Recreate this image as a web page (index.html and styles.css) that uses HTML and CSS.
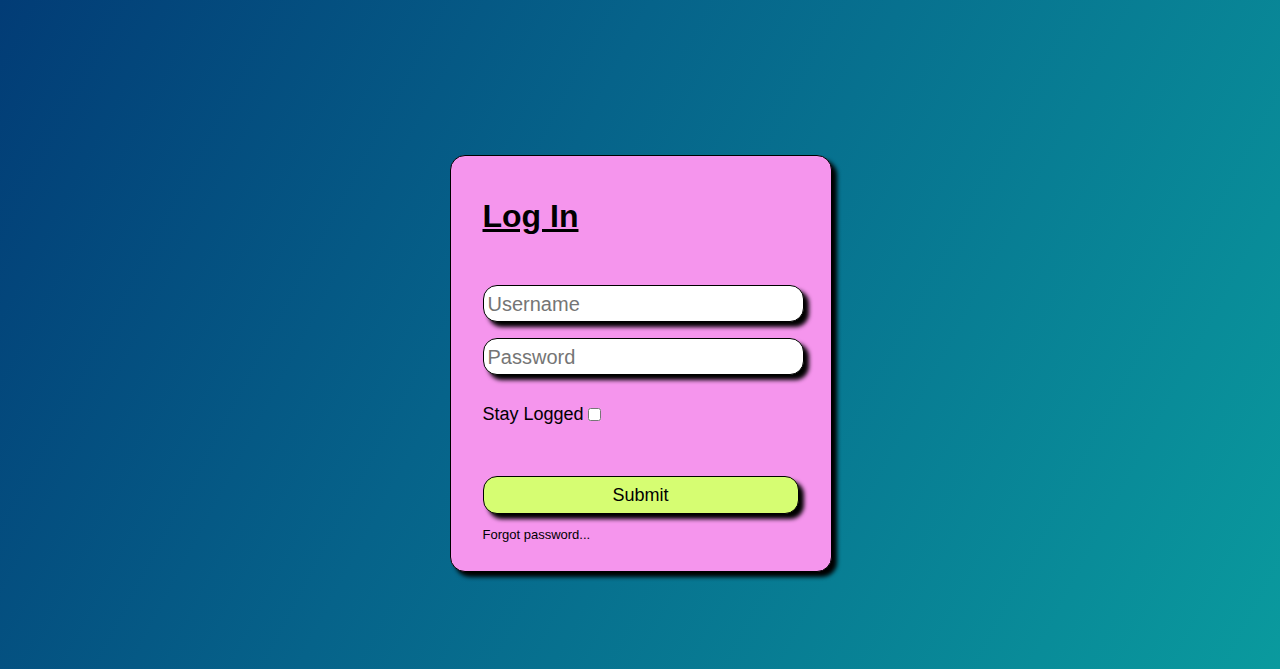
FILE: index.html
```html
<!DOCTYPE html>
<html lang="en">
<head>
<meta charset="utf-8">
<title>Log In</title>
<link rel="stylesheet" href="styles.css">
</head>
<body>
<main class="page">
  <section class="card">
    <h1 class="title">Log In</h1>
    <form class="form">
      <input class="field" type="text" placeholder="Username">
      <input class="field" type="password" placeholder="Password">
      <label class="stay">Stay Logged <input class="check" type="checkbox"></label>
      <button class="submit" type="button">Submit</button>
      <a class="forgot" href="#">Forgot password...</a>
    </form>
  </section>
</main>
</body>
</html>
```
FILE: styles.css
```css
* { box-sizing: border-box; }
html, body { margin: 0; height: 100%; }
body {
  font-family: "Liberation Sans", Arial, sans-serif;
  background: linear-gradient(118deg, #023c76 0%, #06638a 40%, #0a9a9e 100%);
}
.page {
  height: 669px;
  display: flex;
  align-items: flex-start;
  justify-content: center;
  padding-top: 155px;
  padding-left: 1px;
}
.card {
  width: 382px;
  height: 417px;
  background: #f595ed;
  border: 1px solid #000;
  border-radius: 15px;
  box-shadow: 5px 5px 4px #000;
  padding: 0 28px 0 32px;
}
.title {
  margin: 42px 0 0;
  font-size: 32px;
  line-height: 37px;
  font-weight: bold;
  text-decoration: underline;
  color: #000;
}
.form {
  display: flex;
  flex-direction: column;
  align-items: flex-start;
  margin-top: 50px;
}
.field {
  width: 321px;
  height: 37px;
  border: 1px solid #000;
  border-radius: 14px;
  background: #fff;
  box-shadow: 5px 5px 4px #000;
  font-family: "Liberation Sans", Arial, sans-serif;
  font-size: 20px;
  padding: 2px 4px 0 4px;
  margin: 0 0 16px;
  outline: none;
}
.field::placeholder { color: #757575; }
.stay {
  margin-top: 13px;
  font-size: 18px;
  line-height: 21px;
  color: #000;
  display: flex;
  align-items: center;
  gap: 4px;
}
.check {
  margin: 0;
  width: 13px;
  height: 13px;
}
.submit {
  margin-top: 51px;
  width: 316px;
  height: 38px;
  background: #d6fd72;
  border: 1px solid #000;
  border-radius: 14px;
  box-shadow: 5px 5px 4px #000;
  font-family: "Liberation Sans", Arial, sans-serif;
  font-size: 18px;
  color: #000;
}
.forgot {
  margin-top: 13px;
  font-size: 13px;
  line-height: 15px;
  color: #000;
  text-decoration: none;
}
```
